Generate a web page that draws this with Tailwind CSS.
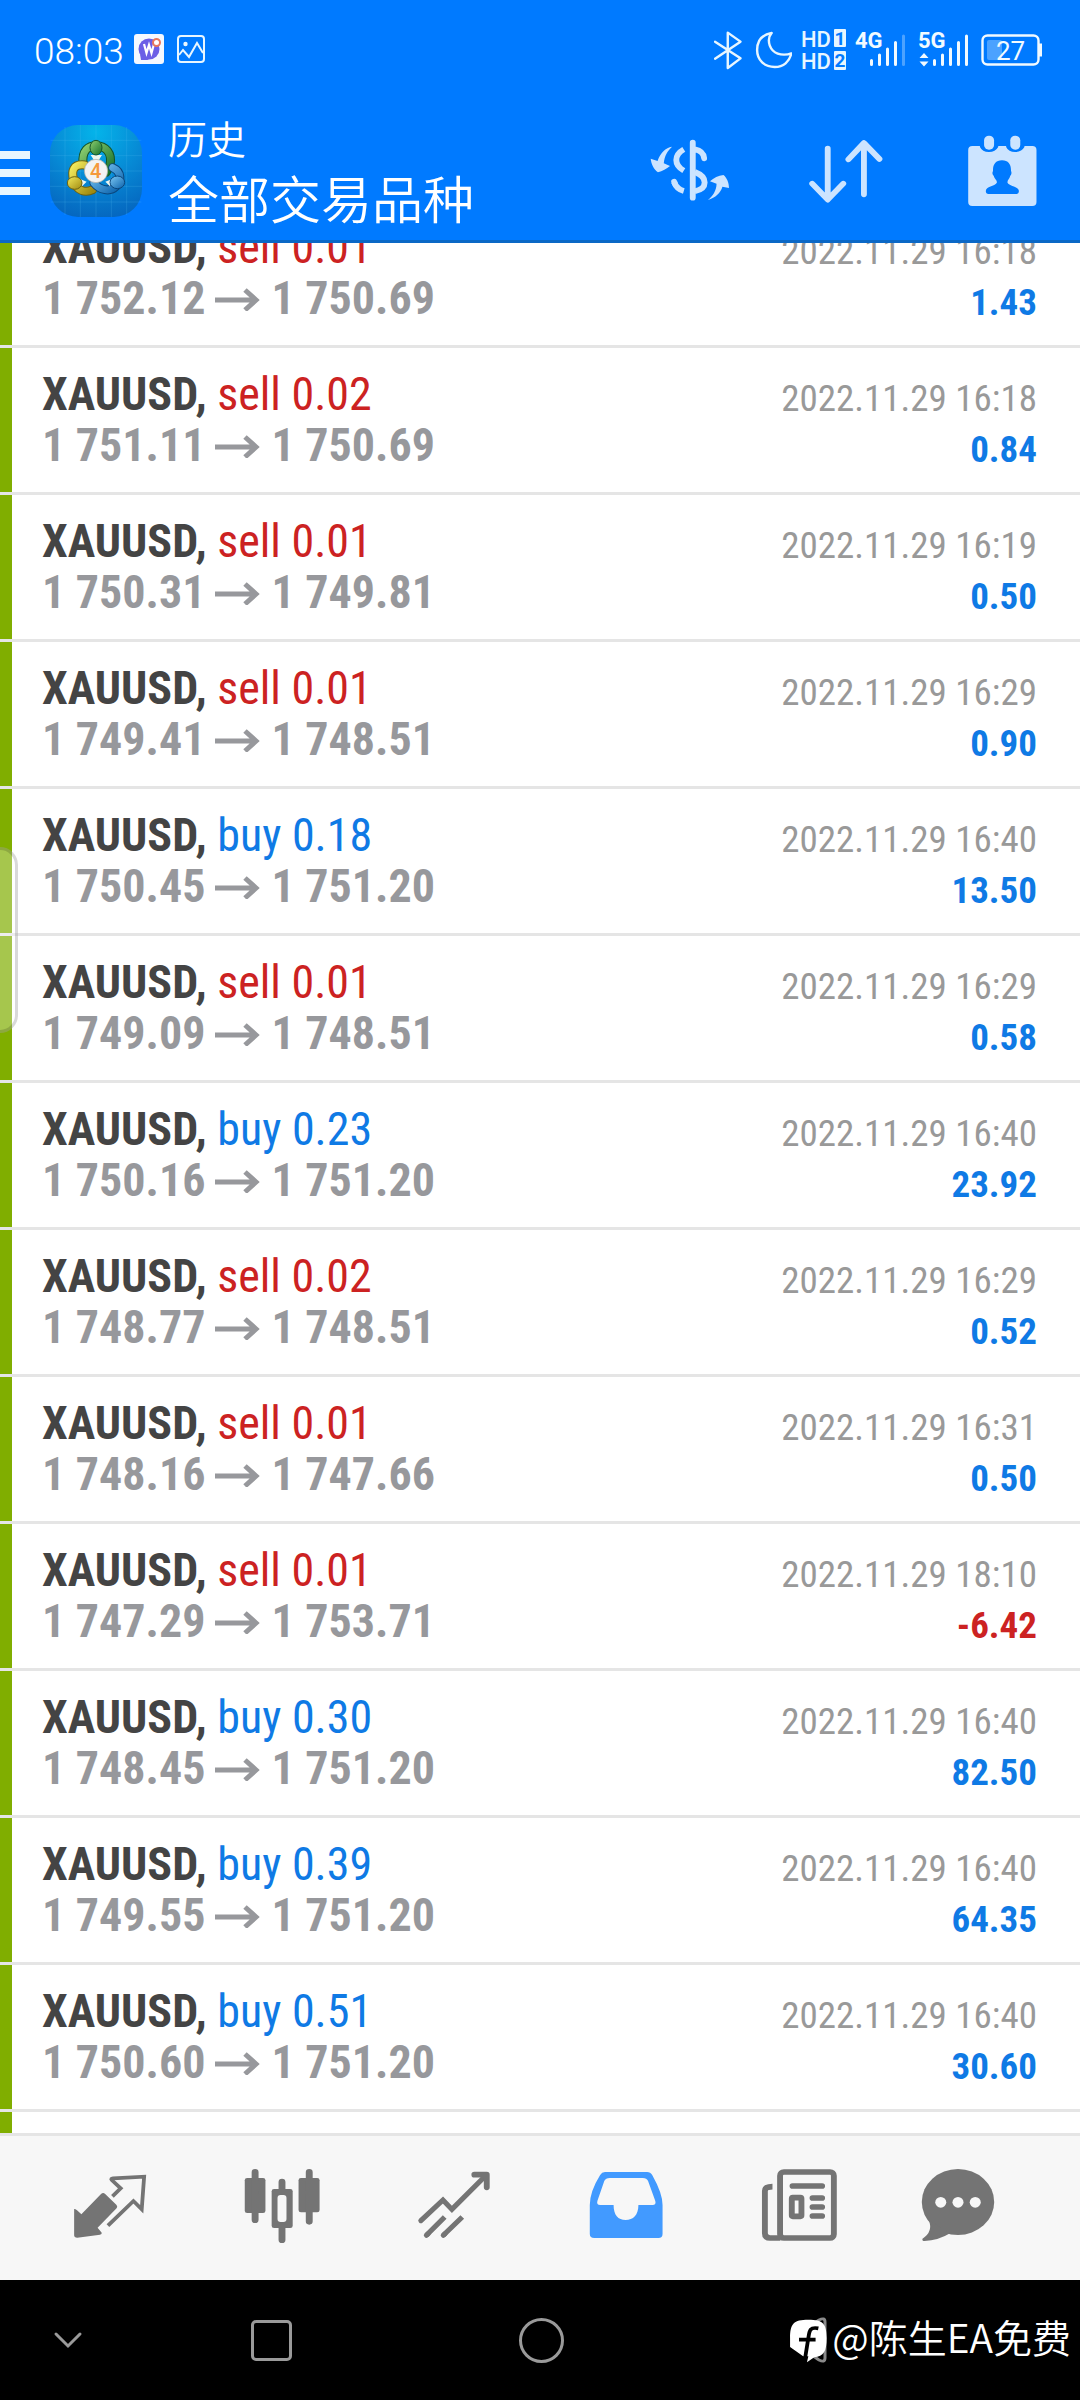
<!DOCTYPE html>
<html lang="zh-CN">
<head>
<meta charset="utf-8">
<meta name="viewport" content="width=device-width, initial-scale=1">
<title>历史</title>
<script src="https://cdn.jsdelivr.net/npm/@tailwindcss/browser@4"></script>
</head>
<body class="flex h-screen flex-col overflow-hidden bg-white font-['Roboto_Condensed','Liberation_Sans_Narrow',Roboto,'Noto_Sans_CJK_SC',sans-serif]">

<header class="shrink-0 border-b-[3px] border-[#0b68c6] bg-[#007aff] text-white">
  <!-- status bar -->
  <div class="flex h-[98px] items-center justify-between pr-[37px] pl-[34px] font-[Roboto,sans-serif]">
    <div class="flex items-center">
      <time class="w-[100px] pt-1 text-[37px] leading-none font-light">08:03</time>
      <svg class="h-[30px] w-[30px]" viewBox="0 0 30 30" aria-hidden="true">
        <rect width="30" height="30" rx="3" fill="#f4f8ff"/>
        <circle cx="15" cy="15" r="10.5" fill="#6b5fe6"/><path d="M6 20L7 26H15Z" fill="#6b5fe6"/>
        <path d="M10 10l2.500 9 2.500-8 2.500 8L20 10" fill="none" stroke="#fff" stroke-width="2.200"/>
        <circle cx="22.500" cy="8.500" r="3.500" fill="#fff" stroke="#e8765c" stroke-width="2"/>
      </svg>
      <svg class="ml-3 h-[30px] w-[30px]" viewBox="0 0 30 30" fill="none" stroke="#e8f6ff" stroke-width="2" aria-hidden="true">
        <rect x="2" y="2" width="26" height="26" rx="3"/><circle cx="9.500" cy="10" r="1.200" fill="#e8f6ff"/>
        <path d="M3 21l4-5 6 7 8-14 6 10"/>
      </svg>
    </div>
    <div class="flex items-center gap-2">
      <svg class="h-[44px] w-[32px]" viewBox="505 78 93 132" preserveAspectRatio="none" fill="none" stroke="#e8f6ff" stroke-width="7" stroke-linecap="round" stroke-linejoin="round" aria-label="蓝牙"><path d="M508 122L582 172 545 201V95L582 122 508 173"/></svg>
      <svg class="h-[44px] w-[38px]" viewBox="621 78 110 132" preserveAspectRatio="none" fill="none" stroke="#e8f6ff" stroke-width="7" stroke-linejoin="round" aria-label="勿扰"><path d="M672 96C640 102 630 125 630 147C630 178 652 198 681 198C706 198 724 182 729 157C722 160 716 161 708 161C680 161 664 142 664 118C664 110 667 102 672 96Z"/></svg>
      <svg class="h-[44px] w-[45px] overflow-visible" viewBox="800 26 45 44" fill="#e8f6ff" font-size="22">
        <text x="801" y="46" font-weight="500">HD</text><text x="801" y="68" font-weight="500">HD</text>
        <rect x="834" y="28" width="12" height="18" rx="1"/><rect x="834" y="50" width="12" height="19" rx="1"/>
        <text x="840" y="44" font-size="19" font-weight="700" text-anchor="middle" fill="#007aff">1</text>
        <text x="840" y="66" font-size="19" font-weight="700" text-anchor="middle" fill="#007aff">2</text>
      </svg>
      <svg class="h-[44px] w-[56px]" viewBox="853 26 56 44" fill="#f2faff" stroke-width="3" stroke-linecap="round">
        <text x="855" y="47" font-size="22" font-weight="700">4G</text>
        <path stroke="#f2faff" d="M871.500 59.500V63.500M879.500 54V63.500M887.500 48V63.500M895.500 41.500V63.500"/>
        <path stroke="#4ca2ff" d="M903.500 35V63.500"/>
      </svg>
      <svg class="h-[44px] w-[56px]" viewBox="917 26 56 44" fill="#f2faff" stroke-width="3" stroke-linecap="round">
        <text x="918" y="47" font-size="22" font-weight="700">5G</text>
        <path d="M924 52l4.500 5h-9zM924 65.500l4.500-5h-9z"/>
        <path stroke="#f2faff" d="M934.500 59.500V63.500M942.500 54V63.500M950.500 48V63.500M958.500 41.500V63.500M966.500 35V63.500"/>
      </svg>
      <svg class="h-[44px] w-[62px]" viewBox="981 26 62 44" fill="#f2faff">
        <rect x="982.500" y="34.500" width="56" height="29" rx="5" fill="none" stroke="#f2faff" stroke-width="2.400"/>
        <rect x="1039" y="42.500" width="3" height="13"/>
        <rect x="987" y="39" width="15" height="20" rx="2" fill="#4ca2ff"/>
        <text x="1010.500" y="58.500" font-size="26" text-anchor="middle">27</text>
      </svg>
    </div>
  </div>

  <!-- app bar -->
  <div class="flex h-[142px] items-center pt-1">
    <button type="button" aria-label="菜单" class="flex w-[30px] flex-col gap-[10px] pt-1">
      <span class="h-2 bg-[#e8f6ff]"></span><span class="h-2 bg-[#e8f6ff]"></span><span class="h-2 bg-[#e8f6ff]"></span>
    </button>
    <svg class="ml-5 h-[92px] w-[92px] shrink-0" viewBox="60 44 276 276" aria-label="MetaTrader 4">
      <defs>
        <radialGradient id="bg" cx=".5" cy=".08" r=".95"><stop offset="0" stop-color="#04b4ea"/><stop offset=".55" stop-color="#0788d4"/><stop offset="1" stop-color="#0566bf"/></radialGradient>
        <linearGradient id="gr" x2="1" y2="1"><stop stop-color="#8fd070"/><stop offset="1" stop-color="#16702c"/></linearGradient>
        <linearGradient id="ye" x2="1" y2="1"><stop stop-color="#f3ea5c"/><stop offset="1" stop-color="#a08a10"/></linearGradient>
        <linearGradient id="bl" x2="1" y2="1"><stop stop-color="#7cc8f4"/><stop offset="1" stop-color="#0b62ac"/></linearGradient>
      </defs>
      <rect x="60" y="44" width="276" height="276" rx="84" fill="url(#bg)"/>
      <path d="M105 50V314M151 44V320M198 44V320M244 44V320M290 50V314M62 90H334M60 136H336M60 182H336M60 228H336M62 275H334" stroke="#5cc4f4" stroke-opacity=".3" stroke-width="2"/>
      <g fill="none" stroke-linecap="round">
        <path d="M159 162C155 118 176 106 199 106C226 106 248 128 240 164Q236 176 228 186" stroke="#14542a" stroke-width="27"/>
        <path d="M159 162C155 118 176 106 199 106C226 106 248 128 240 164Q236 176 228 186" stroke="url(#gr)" stroke-width="21"/>
        <path d="M164 164C128 160 124 184 131 208C138 244 168 248 188 238" stroke="#6d6210" stroke-width="27"/>
        <path d="M164 164C128 160 124 184 131 208C138 244 168 248 188 238" stroke="url(#ye)" stroke-width="21"/>
        <path d="M248 172C276 184 274 214 258 228C240 246 210 240 192 218" stroke="#0a467c" stroke-width="27"/>
        <path d="M248 172C276 184 274 214 258 228C240 246 210 240 192 218" stroke="url(#bl)" stroke-width="21"/>
      </g>
      <path d="M182 134H216L206 150H192ZM150 206L170 214 156 228ZM246 206L226 214 240 228Z" fill="#eef6f0"/>
      <ellipse cx="198" cy="112" rx="18" ry="22" fill="url(#gr)" stroke="#14542a" stroke-width="3"/>
      <ellipse cx="134" cy="218" rx="22" ry="19" fill="url(#ye)" stroke="#6d6210" stroke-width="3"/>
      <ellipse cx="262" cy="216" rx="22" ry="19" fill="url(#bl)" stroke="#0a467c" stroke-width="3"/>
      <circle cx="198" cy="182" r="35" fill="#f3f3f3" stroke="#a8a8a0" stroke-width="2"/>
      <text x="197" y="204" font-size="60" font-weight="500" text-anchor="middle" fill="#f59a3c" font-family="Roboto">4</text>
    </svg>
    <div class="ml-[26px] flex-1 pb-1 font-[350] font-['Noto_Sans_CJK_SC',sans-serif]">
      <p class="text-[39px] leading-[56px]">历史</p>
      <h1 class="text-[51px] leading-[64px] whitespace-nowrap">全部交易品种</h1>
    </div>
    <button type="button" aria-label="货币" class="flex w-[156px] justify-center">
      <svg class="h-[72px] w-[80px]" viewBox="320 402 232 216" preserveAspectRatio="none" fill="#cce4ff">
        <g fill="none" stroke="#cce4ff" stroke-width="17">
          <path stroke-linecap="round" d="M444 425V590M450 445Q475 450 477 472"/>
          <path d="M450 513C488 528 488 562 450 571M418 445C389 462 389 492 418 509"/>
          <path d="M390 543Q397 564 418 570"/><path stroke-linecap="round" d="M390 542L392 548"/>
        </g>
        <path d="M384 437C365 440 350 455 342 480L322 473C324 490 330 503 343 514C356 510 368 503 378 495L360 487C362 465 370 450 384 437Z"/>
        <path d="M488 597C510 590 525 575 530 557L549 561C549 545 543 530 533 522C518 524 505 530 494 541L513 548C513 568 502 585 488 597Z"/>
      </svg>
    </button>
    <button type="button" aria-label="排序" class="flex w-[156px] justify-center">
      <svg class="h-[72px] w-[80px]" viewBox="773 402 232 216" preserveAspectRatio="none" fill="none" stroke="#cce4ff" stroke-width="17" stroke-linecap="round" stroke-linejoin="round"><path d="M836 443V595M791 548L836 596 881 548M941 580V427M896 475L941 426 986 474"/></svg>
    </button>
    <button type="button" aria-label="日期" class="flex w-[156px] justify-center">
      <svg class="h-[72px] w-[80px]" viewBox="1225 402 232 216" preserveAspectRatio="none" fill="#cce4ff">
        <rect x="1243" y="435" width="198" height="180" rx="12"/>
        <path fill="#007aff" d="M1277 430V438Q1284 453 1303 453T1330 438V430ZM1353 430V438Q1360 453 1379 453T1406 438V430Z"/>
        <rect x="1289" y="404" width="29" height="42" rx="14"/><rect x="1365" y="404" width="29" height="42" rx="14"/>
        <path fill="#007aff" d="M1341 478C1360 478 1368 492 1367 510C1370 514 1368 522 1365 524C1363 534 1356 536 1357 545C1362 556 1390 556 1390 570Q1390 579 1382 579H1302Q1294 579 1294 570C1294 556 1320 556 1326 545C1327 536 1319 534 1317 524C1313 522 1312 514 1315 510C1314 492 1322 478 1341 478Z"/>
      </svg>
    </button>
  </div>
</header>

<main class="relative min-h-0 flex-1 overflow-hidden">
  <ul id="deals" class="-mt-[42px]"></ul>
  <div class="absolute top-[604px] left-0 h-[186px] w-[18px] rounded-r-[18px] border-[3px] border-l-0 border-black/15 bg-white/30"></div>
</main>

<nav class="flex h-[147px] shrink-0 items-center border-t-[3px] border-[#e5e5e5] bg-[#f7f7f7] pr-12 pl-6 text-[#747474]">
  <button type="button" aria-label="行情" class="flex flex-1 justify-center">
    <svg class="h-[80px] w-[80px]" viewBox="203 234 232 240" preserveAspectRatio="none" fill="currentColor">
      <path d="M293 312Q299 306 305 312L338 345Q342 350 338 355L283 413 295 428Q296 433 290 434L224 443Q215 443 215 436V357Q219 355 236 373Z"/>
      <path d="M326 319L350 295 324 270Q320 266 328 265L418 260 411 358 387 333 313 407" fill="none" stroke="currentColor" stroke-width="11"/>
    </svg>
  </button>
  <button type="button" aria-label="图表" class="flex flex-1 justify-center">
    <svg class="h-[80px] w-[80px]" viewBox="701 234 232 240" preserveAspectRatio="none" fill="currentColor">
      <rect x="709" y="264" width="60" height="105" rx="7"/><rect x="865" y="264" width="61" height="103" rx="7"/>
      <path d="M739 247V389M896 247V394M817 276V300M817 410V449" stroke="currentColor" stroke-width="20" stroke-linecap="round"/>
      <rect x="787" y="297" width="61" height="117" rx="7"/><rect x="804" y="315" width="26" height="81" rx="9" fill="#f7f7f7"/>
    </svg>
  </button>
  <button type="button" aria-label="交易" class="flex flex-1 justify-center">
    <svg class="h-[80px] w-[80px]" viewBox="1201 234 232 240" preserveAspectRatio="none" fill="none" stroke="currentColor" stroke-width="15">
      <path stroke-linecap="round" d="M1221 392L1285 330 1311 358 1410 256M1237 436L1242 431M1286 436L1291 431"/>
      <path stroke-linecap="round" stroke-linejoin="round" stroke-width="17" d="M1376 254H1412V292"/>
      <path d="M1237 436L1290 381M1286 436L1341 381"/>
    </svg>
  </button>
  <button type="button" aria-label="历史" aria-current="page" class="flex flex-1 justify-center text-[#429aff]">
    <svg class="h-[80px] w-[80px]" viewBox="135 234 232 240" preserveAspectRatio="none" fill="currentColor" fill-rule="evenodd">
      <path d="M190 246H312Q322 246 327 255Q357 310 357 345V432Q357 444 345 444H159Q146 444 146 432V345Q146 305 176 255Q181 246 190 246ZM204 264H300Q311 264 315 273L336 333Q339 345 328 345H287C287 375 272 390 250 390C228 390 215 375 215 345H176Q165 345 168 333L188 273Q192 264 204 264Z"/>
    </svg>
  </button>
  <button type="button" aria-label="新闻" class="flex flex-1 justify-center">
    <svg class="h-[80px] w-[80px]" viewBox="635 234 232 240" preserveAspectRatio="none" fill="none" stroke="currentColor" stroke-width="17">
      <rect x="699" y="246" width="156" height="198" rx="11"/>
      <path d="M677 290Q655 290 655 303V430Q655 444 670 444H700"/>
      <path stroke-linecap="round" d="M735 288H821M793 324H821M793 351H821M793 378H821"/>
      <rect x="733" y="323" width="28" height="56" rx="3"/>
    </svg>
  </button>
  <button type="button" aria-label="消息" class="flex w-[148px] justify-center">
    <svg class="h-[80px] w-[80px]" viewBox="1097 234 232 240" preserveAspectRatio="none" fill="currentColor">
      <ellipse cx="1213" cy="336" rx="105" ry="99"/><path d="M1128 390Q1142 425 1110 446Q1108 453 1116 453Q1155 452 1190 430Z"/>
      <g fill="#f7f7f7"><circle cx="1163" cy="337" r="16"/><circle cx="1213" cy="337" r="16"/><circle cx="1263" cy="337" r="16"/></g>
    </svg>
  </button>
</nav>

<footer class="relative flex h-[120px] shrink-0 items-center bg-black">
  <button type="button" aria-label="收起" class="flex w-[136px] justify-center">
    <svg class="h-5 w-8" viewBox="0 0 32 20" fill="none" stroke="#9a9a9a" stroke-width="3" stroke-linecap="round"><path d="M4 4L16 16 28 4"/></svg>
  </button>
  <button type="button" aria-label="最近任务" class="flex w-1/4 justify-center"><span class="h-[41px] w-[41px] rounded-[5px] border-[3px] border-[#9a9a9a]"></span></button>
  <button type="button" aria-label="主屏幕" class="flex w-1/4 justify-center"><span class="h-[45px] w-[45px] rounded-full border-[3px] border-[#9a9a9a]"></span></button>
  <button type="button" aria-label="返回" class="flex w-1/4 justify-center">
    <svg class="h-[46px] w-[40px]" viewBox="0 0 40 46" fill="none" stroke="#8a8a8a" stroke-width="3" stroke-linejoin="round"><path d="M2 21L28 3Q34 0 34 5V41Q34 46 28 43L2 25Q-1 23 2 21Z"/></svg>
  </button>
  <div class="absolute inset-y-0 right-[9px] flex items-center gap-1 text-white">
    <svg class="h-[46px] w-[40px]" viewBox="724 682 116 138" preserveAspectRatio="none" aria-hidden="true">
      <path fill="#fff" d="M783 690C826 690 836 702 836 745C836 785 828 800 800 803L779 818 783 800H768L730 772V745C730 702 740 690 783 690Z"/>
      <path fill="none" stroke="#000" stroke-width="11" d="M812 716C788 711 786 722 783 745L774 803M756 750H804"/>
    </svg>
    <span class="pb-2 text-[39px] leading-none font-[350] whitespace-nowrap font-['Noto_Sans_CJK_SC',sans-serif]">@陈生EA免费</span>
  </div>
</footer>

<script>
const deals = [
  ['sell', '0.01', '1 752.12', '1 750.69', '2022.11.29 16:18', '1.43'],
  ['sell', '0.02', '1 751.11', '1 750.69', '2022.11.29 16:18', '0.84'],
  ['sell', '0.01', '1 750.31', '1 749.81', '2022.11.29 16:19', '0.50'],
  ['sell', '0.01', '1 749.41', '1 748.51', '2022.11.29 16:29', '0.90'],
  ['buy', '0.18', '1 750.45', '1 751.20', '2022.11.29 16:40', '13.50'],
  ['sell', '0.01', '1 749.09', '1 748.51', '2022.11.29 16:29', '0.58'],
  ['buy', '0.23', '1 750.16', '1 751.20', '2022.11.29 16:40', '23.92'],
  ['sell', '0.02', '1 748.77', '1 748.51', '2022.11.29 16:29', '0.52'],
  ['sell', '0.01', '1 748.16', '1 747.66', '2022.11.29 16:31', '0.50'],
  ['sell', '0.01', '1 747.29', '1 753.71', '2022.11.29 18:10', '-6.42'],
  ['buy', '0.30', '1 748.45', '1 751.20', '2022.11.29 16:40', '82.50'],
  ['buy', '0.39', '1 749.55', '1 751.20', '2022.11.29 16:40', '64.35'],
  ['buy', '0.51', '1 750.60', '1 751.20', '2022.11.29 16:40', '30.60'],
];
const row = ([side, lots, open, close, time, profit]) => `
  <li class="flex h-[147px] border-b-[3px] border-[#e5e5e5]">
    <span class="w-3 bg-[#80ae00]"></span>
    <div class="flex flex-1 justify-between pt-[21px] pr-[43px] pl-[30px] leading-[51px] whitespace-nowrap">
      <div class="text-[46px]">
        <p class="text-[#444444]"><b>XAUUSD,</b> <span class="${side === 'buy' ? 'text-[#0f7ae5]' : 'text-[#cc2222]'}">${side} ${lots}</span></p>
        <p class="flex items-center gap-[10px] font-bold text-[#97989c]">${open}
          <svg class="h-6 w-[46px]" viewBox="0 0 46 24" fill="none" stroke="currentColor" stroke-width="5" aria-label="→"><path d="M0 13H42M30 3L41 13 30 23"/></svg>
          ${close}</p>
      </div>
      <div class="pt-1 text-right text-[37px]">
        <p class="text-[#999999]">${time}</p>
        <p class="font-bold ${profit.startsWith('-') ? 'text-[#cc2222]' : 'text-[#0f7ae5]'}">${profit}</p>
      </div>
    </div>
  </li>`;
document.getElementById('deals').innerHTML =
  deals.map(row).join('') + '<li class="flex h-[147px]"><span class="w-3 bg-[#80ae00]"></span></li>';
</script>
</body>
</html>
